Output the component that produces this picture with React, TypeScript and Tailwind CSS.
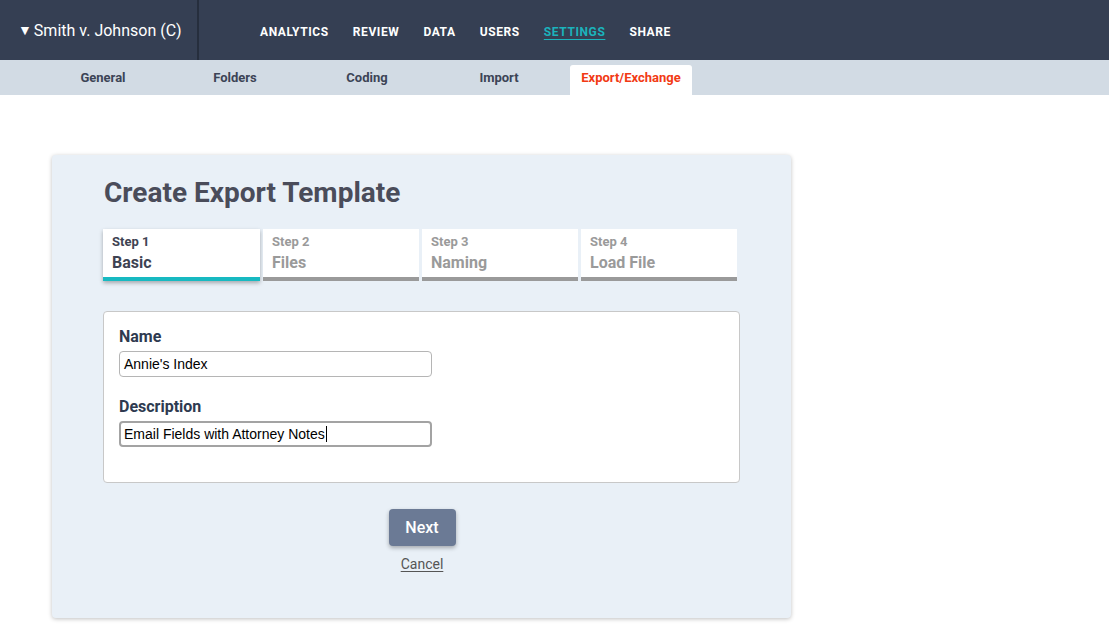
import React from "react";

const navItems = ["ANALYTICS", "REVIEW", "DATA", "USERS", "SETTINGS", "SHARE"];
const subTabs = ["General", "Folders", "Coding", "Import", "Export/Exchange"];
const steps = [
  { n: "Step 1", label: "Basic" },
  { n: "Step 2", label: "Files" },
  { n: "Step 3", label: "Naming" },
  { n: "Step 4", label: "Load File" },
];

export default function App() {
  return (
    <div className="min-h-[638px] w-full bg-white font-['Roboto',sans-serif]">
      {/* Top bar */}
      <header className="flex h-[60px] items-stretch bg-[#353f53]">
        <div className="flex w-[199px] items-center border-r-2 border-[#262e3d] pb-[1px] pl-[18px] pt-[2px] text-[16px] text-white">
          <span className="mr-[2px] text-[14px]">▼</span>Smith v. Johnson (C)
        </div>
        <nav className="flex items-center gap-[24px] pl-[61px] pt-[4px]">
          {navItems.map((item) => (
            <span
              key={item}
              className={
                item === "SETTINGS"
                  ? "text-[12px] font-bold tracking-[0.6px] text-[#1bb3bc] underline underline-offset-[3px]"
                  : "text-[12px] font-bold tracking-[0.6px] text-white"
              }
            >
              {item}
            </span>
          ))}
        </nav>
      </header>

      {/* Settings sub tabs */}
      <div className="flex h-[35px] items-end gap-[10px] bg-[#d2dbe4] pl-[42px]">
        {subTabs.map((t) => (
          <div
            key={t}
            className={
              t === "Export/Exchange"
                ? "flex h-[30px] w-[122px] items-center justify-center rounded-t-[3px] bg-white pb-[5px] text-[13px] font-bold text-[#f23a14]"
                : "flex h-[30px] w-[122px] items-center justify-center pb-[5px] text-[13px] font-bold text-[#3c4456]"
            }
          >
            {t}
          </div>
        ))}
      </div>

      {/* Card */}
      <div className="pl-[52px] pt-[60px]">
        <div className="w-[739px] rounded-[4px] bg-[#e9f0f7] pb-[43px] pl-[52px] pr-[51px] pt-[19px] shadow-[0_1px_4px_rgba(0,0,0,0.25)]">
          <h1 className="text-[28px] font-bold leading-[37px] text-[#4a4c5a]">Create Export Template</h1>

          <div className="ml-[-1px] mt-[18px] flex gap-[3px]">
            {steps.map((s, i) => (
              <div
                key={s.n}
                className={
                  i === 0
                    ? "flex h-[52px] w-[157px] flex-col border-b-4 border-[#17b9c1] bg-white pl-[9px] pt-[5px] shadow-[0_2px_4px_rgba(0,0,0,0.3)]"
                    : "flex h-[52px] w-[156px] flex-col border-b-4 border-[#9a9a9a] bg-white pl-[9px] pt-[5px]"
                }
              >
                <span className={i === 0 ? "text-[13px] font-bold leading-[16px] text-[#3e4352]" : "text-[13px] font-bold leading-[16px] text-[#9a9a9a]"}>
                  {s.n}
                </span>
                <span className={i === 0 ? "mt-[3px] text-[16px] font-bold leading-[20px] text-[#3e4352]" : "mt-[3px] text-[16px] font-bold leading-[20px] text-[#9a9a9a]"}>
                  {s.label}
                </span>
              </div>
            ))}
          </div>

          <div className="ml-[-1px] mt-[30px] h-[172px] w-[637px] rounded-[4px] border border-[#c8c8c8] bg-white pl-[15px] pt-[15px]">
            <label className="block text-[16px] font-bold leading-[20px] text-[#2e3a50]">Name</label>
            <div className="mt-[4px] flex h-[26px] w-[313px] items-center rounded-[4px] border border-[#b5b5b5] px-[4px] font-['Liberation_Sans',Arial,sans-serif] text-[14px] text-black">
              Annie's Index
            </div>
            <label className="mt-[20px] block text-[16px] font-bold leading-[20px] text-[#2e3a50]">Description</label>
            <div className="mt-[4px] flex h-[26px] w-[313px] items-center rounded-[4px] border-2 border-[#a3a3a3] px-[3px] font-['Liberation_Sans',Arial,sans-serif] text-[14px] text-black">
              Email Fields with Attorney Notes
              <span className="ml-[1px] inline-block h-[16px] w-[1px] bg-black" />
            </div>
          </div>

          <div className="mt-[26px] flex flex-col items-center">
            <button className="h-[37px] w-[67px] rounded-[4px] bg-[#6b7a95] text-[16px] font-medium text-white shadow-[0_2px_4px_rgba(0,0,0,0.3)]">
              Next
            </button>
            <a className="mt-[8px] text-[14px] text-[#555] underline underline-offset-2">Cancel</a>
          </div>
        </div>
      </div>
    </div>
  );
}
